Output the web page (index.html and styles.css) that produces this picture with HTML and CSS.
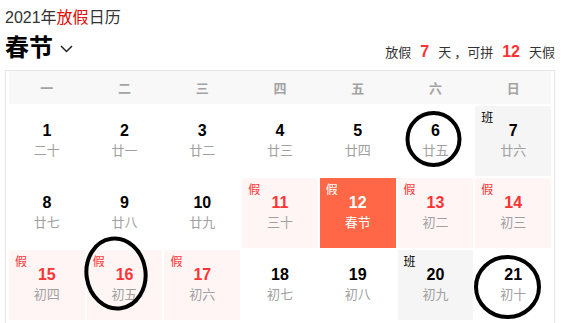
FILE: index.html
```html
<!DOCTYPE html>
<html lang="zh">
<head>
<meta charset="utf-8">
<link rel="stylesheet" href="styles.css">
</head>
<body>
<div class="page">
  <div class="title">2021年<span class="red">放假</span>日历</div>
  <div class="head">
    <div class="festival">春节
      <svg class="chev" width="13" height="8" viewBox="0 0 13 8"><polyline points="1,1 6.5,6.5 12,1" fill="none" stroke="#222" stroke-width="1.5"/></svg>
    </div>
    <div class="stats">放假<b>7</b>天<span class="comma">，</span>可拼<b>12</b>天假</div>
  </div>
  <div class="cal">
    <div class="week">
      <span>一</span><span>二</span><span>三</span><span>四</span><span>五</span><span>六</span><span>日</span>
    </div>
    <div class="grid">
      <div class="cell"><div class="num">1</div><div class="lunar">二十</div></div>
      <div class="cell"><div class="num">2</div><div class="lunar">廿一</div></div>
      <div class="cell"><div class="num">3</div><div class="lunar">廿二</div></div>
      <div class="cell"><div class="num">4</div><div class="lunar">廿三</div></div>
      <div class="cell"><div class="num">5</div><div class="lunar">廿四</div></div>
      <div class="cell"><div class="num">6</div><div class="lunar">廿五</div></div>
      <div class="cell work"><span class="tag">班</span><div class="num">7</div><div class="lunar">廿六</div></div>

      <div class="cell"><div class="num">8</div><div class="lunar">廿七</div></div>
      <div class="cell"><div class="num">9</div><div class="lunar">廿八</div></div>
      <div class="cell"><div class="num">10</div><div class="lunar">廿九</div></div>
      <div class="cell hol"><span class="tag">假</span><div class="num">11</div><div class="lunar">三十</div></div>
      <div class="cell today"><span class="tag">假</span><div class="num">12</div><div class="lunar">春节</div></div>
      <div class="cell hol"><span class="tag">假</span><div class="num">13</div><div class="lunar">初二</div></div>
      <div class="cell hol"><span class="tag">假</span><div class="num">14</div><div class="lunar">初三</div></div>

      <div class="cell hol"><span class="tag">假</span><div class="num">15</div><div class="lunar">初四</div></div>
      <div class="cell hol"><span class="tag">假</span><div class="num">16</div><div class="lunar">初五</div></div>
      <div class="cell hol"><span class="tag">假</span><div class="num">17</div><div class="lunar">初六</div></div>
      <div class="cell"><div class="num">18</div><div class="lunar">初七</div></div>
      <div class="cell"><div class="num">19</div><div class="lunar">初八</div></div>
      <div class="cell work"><span class="tag">班</span><div class="num">20</div><div class="lunar">初九</div></div>
      <div class="cell"><div class="num">21</div><div class="lunar">初十</div></div>
    </div>
  </div>
  <svg class="marks" width="574" height="323" viewBox="0 0 574 323">
    <ellipse cx="433.5" cy="139" rx="26" ry="26" fill="none" stroke="#000" stroke-width="4"/>
    <ellipse cx="116" cy="273.5" rx="29.5" ry="35" fill="none" stroke="#000" stroke-width="4" transform="rotate(-8 116 273.5)"/>
    <ellipse cx="507.5" cy="287" rx="31.5" ry="30" fill="none" stroke="#000" stroke-width="4"/>
  </svg>
</div>
</body>
</html>
```
FILE: styles.css
```css
* { box-sizing: border-box; }
html, body { margin: 0; padding: 0; background: #fff; }
body {
  font-family: "Liberation Sans", "Noto Sans CJK SC", sans-serif;
  color: #222;
  width: 574px;
  height: 323px;
  overflow: hidden;
}
.page { position: relative; padding: 8px 0 0 5px; width: 574px; height: 323px; }
.title { font-size: 16px; line-height: 20px; color: #333; }
.red { color: #e10601; }
.head {
  display: flex;
  justify-content: space-between;
  align-items: center;
  height: 28px;
  margin-top: 6px;
  margin-bottom: 8px;
  width: 550px;
}
.festival {
  font-size: 24px;
  font-weight: bold;
  color: #000;
  line-height: 28px;
  display: flex;
  align-items: center;
}
.chev { margin-left: 7px; margin-top: 1px; }
.stats {
  font-size: 13px;
  color: #333;
  padding-top: 6px;
  display: flex;
  align-items: baseline;
}
.stats b {
  font-size: 16px;
  color: #f33;
  margin: 0 9px;
}
.comma { margin-left: 3px; }
.cal {
  width: 550px;
  border: 1px solid #e6e6e6;
  border-bottom: none;
  padding: 0 3px 3px;
}
.week {
  display: grid;
  grid-template-columns: repeat(7, 1fr);
  gap: 2px;
  background: #f8f8f8;
  height: 33px;
  margin-bottom: 2px;
  align-items: center;
}
.week span {
  text-align: center;
  font-size: 13px;
  font-weight: bold;
  color: #a3a3a3;
}
.grid {
  display: grid;
  grid-template-columns: repeat(7, 1fr);
  grid-auto-rows: 70px;
  gap: 2px;
}
.cell {
  position: relative;
  display: flex;
  flex-direction: column;
  justify-content: center;
  align-items: center;
}
.num { font-size: 16px; font-weight: bold; line-height: 20px; color: #000; }
.lunar { font-size: 13px; line-height: 20px; color: #a0a0a0; }
.tag {
  position: absolute;
  left: 6px;
  top: 5px;
  font-size: 12px;
  line-height: 14px;
  color: #f33;
}
.hol { background: #fff5f5; }
.hol .num { color: #f33; }
.work { background: #f5f5f5; }
.work .tag { color: #000; }
.today { background: #ff6747; }
.today .num, .today .lunar, .today .tag { color: #fff; }
.marks { position: absolute; left: 0; top: 0; pointer-events: none; }
```
